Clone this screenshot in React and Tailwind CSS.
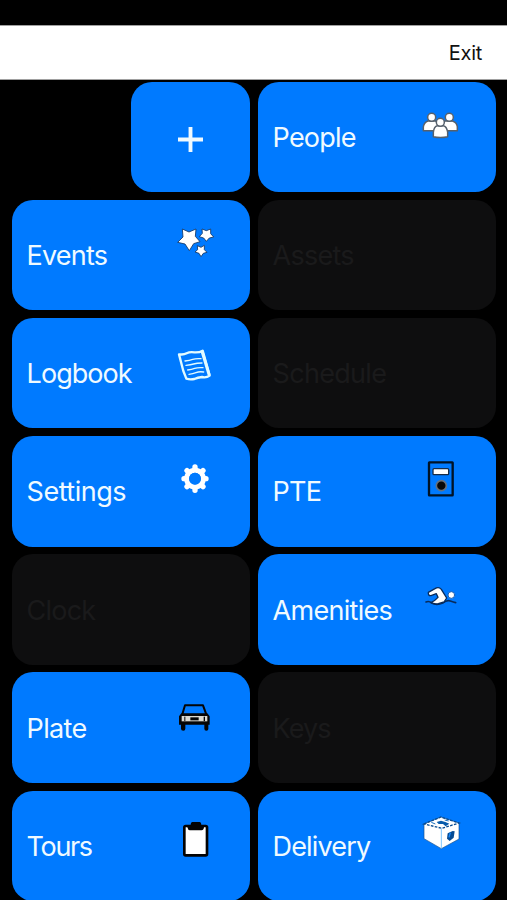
const PeopleIcon = () => (
    <svg viewBox="0 3 180 180" className="h-[60px] w-[60px] overflow-visible" fill="#fff" stroke="#56606c" strokeWidth="4.5" strokeLinejoin="round">
        <path d="M40 107V96Q42 82 54 78H77Q86 83 86 107Z" />
        <circle cx="65" cy="67" r="12" />
        <path d="M95 107Q95 83 105 78H127Q140 82 142 95V107Z" />
        <circle cx="118" cy="67" r="12" />
        <path d="M70 125V112Q72 94 82 92H100Q110 94 113 111V125Q91 130 70 125Z" />
        <circle cx="91" cy="82" r="12" />
    </svg>
);

const EventsIcon = () => (
    <svg viewBox="-3 -3 180 180" className="h-[60px] w-[60px] overflow-visible" fill="#fff" stroke="#12345f" strokeWidth="2.5" strokeLinejoin="round">
        <path d="M52 42L72 51L93 42L91 64L105 80L86 86L73 107L60 87L38 82L54 66Z" />
        <path d="M111 42L124 47L137 42L137 56L146 66L133 69L124 79L116 69L103 65L112 55Z" />
        <path d="M97 92L108 97L118 91L118 104L126 112L115 115L108 125L102 115L90 111L98 104Z" />
    </svg>
);

const LogbookIcon = () => (
    <svg viewBox="-3 -9 180 180" className="h-[60px] w-[60px] overflow-visible" fill="none" stroke="#e2fbff" strokeWidth="7" strokeLinejoin="round" strokeLinecap="round">
        <path d="M42 58Q56 60 65 55T88 52Q103 53 113 47L134 122Q124 129 111 126Q98 127 88 132Q75 135 64 131L55 108Z" />
        <path d="M112 52L132 118" strokeWidth="9" />
        <path d="M60 78Q74 76 83 73T108 71M63 91Q77 90 86 87T111 84M68 105Q80 103 89 100T114 98M72 118Q84 117 93 113T116 111" strokeWidth="4" />
    </svg>
);

const SettingsIcon = () => (
    <svg viewBox="-3 0 180 180" className="h-[60px] w-[60px] overflow-visible" fill="#fff">
        <circle cx="90" cy="86" r="25" fill="none" stroke="#fff" strokeWidth="15" />
        <g stroke="#fff" strokeWidth="16" strokeLinecap="round">
            <path d="M90 57V51M90 115V121M61 86H57M119 86H123M69 65L66 62M111 107L114 110M69 107L66 110M111 65L114 62" />
        </g>
        <circle cx="90" cy="86" r="18" fill="#007aff" />
    </svg>
);

const PteIcon = () => (
    <svg viewBox="0 0 180 180" className="h-[60px] w-[60px] overflow-visible" fill="none">
        <rect x="57" y="37" width="71" height="99" rx="1" stroke="#001326" strokeWidth="7" />
        <rect x="69" y="56" width="47" height="18" rx="3" fill="#fff" stroke="#172c48" strokeWidth="4" />
        <circle cx="94" cy="107" r="15" fill="#080808" stroke="#66717e" strokeWidth="5" />
    </svg>
);

const AmenitiesIcon = () => (
    <svg viewBox="0 -4 180 180" className="h-[60px] w-[60px] overflow-visible" fill="#fff" strokeLinejoin="round" strokeLinecap="round">
        <path d="M48 98Q57 94 65 101Q80 109 98 101Q111 91 121 95T137 100" fill="none" stroke="#082b5b" strokeWidth="5" />
        <path d="M55 69L75 58Q86 51 94 60L110 86L102 98L85 103Q70 105 64 99Q75 94 84 84L79 73L63 79Q54 80 55 69Z" stroke="#082b5b" strokeWidth="4" />
        <circle cx="124" cy="77" r="10" stroke="#1b60b5" strokeWidth="3" />
    </svg>
);

const PlateIcon = () => (
    <svg viewBox="-3 -10 180 180" className="h-[60px] w-[60px] overflow-visible" fill="#050505">
        <path d="M51 78L60 48H114L125 78" fill="none" stroke="#050505" strokeWidth="6" strokeLinejoin="round" />
        <path d="M49 72H127L134 81V106H130V119Q130 124 124 124Q118 124 118 118V106H61V118Q61 124 55 124Q48 124 48 118V106H42V81Z" />
        <rect x="50" y="80" width="77" height="16" fill="#d9d9d2" />
        <rect x="58" y="82" width="3" height="13" />
        <rect x="76" y="84" width="25" height="9" />
        <rect x="116" y="82" width="4" height="13" />
    </svg>
);

const ToursIcon = () => (
    <svg viewBox="-3 -15 180 180" className="h-[60px] w-[60px] overflow-visible" fill="#030303">
        <path d="M62 44H77Q77 36 82 36H104Q109 36 109 44H122Q130 44 130 52V132Q130 140 122 140H62Q54 140 54 132V52Q54 44 62 44Z" />
        <path d="M62 52H67Q69 61 75 61H110Q116 61 117 52H122V132H62Z" fill="#fff" />
    </svg>
);

const DeliveryIcon = () => (
    <svg viewBox="0 0 180 180" className="h-[60px] w-[60px] overflow-visible" fill="#fff">
        <path d="M42 57L93 36L147 54V102L94 131L42 101Z" stroke="#16508c" strokeWidth="2" />
        <path d="M42 57L93 36L147 54L96 70Z" fill="none" stroke="#074b91" strokeWidth="4" strokeDasharray="8 4" />
        <path d="M94 70V130" stroke="#7ec6ff" strokeWidth="3" />
        <path d="M80 51L93 47L106 51L118 56L107 64L99 57L86 57Z" fill="#075bab" />
        <path d="M64 52L76 57M104 45L116 48" stroke="#1b70bf" strokeWidth="3" />
        <path d="M113 85L128 78L134 79L131 98L119 108L111 101Z" fill="#064b94" />
        <path d="M121 83L117 97" stroke="#168aff" strokeWidth="4" />
    </svg>
);

const tiles = [
    { name: 'Events', icon: EventsIcon, spacing: 'tracking-[-0.8px]' },
    { name: 'Assets', spacing: 'tracking-[-0.75px]' },
    { name: 'Logbook', icon: LogbookIcon, spacing: 'tracking-[-0.95px]' },
    { name: 'Schedule', spacing: 'tracking-[-0.7px]' },
    { name: 'Settings', icon: SettingsIcon, spacing: 'tracking-[-0.5px]' },
    { name: 'PTE', icon: PteIcon, spacing: 'tracking-[-0.8px]' },
    { name: 'Clock', spacing: 'tracking-[-0.8px]' },
    { name: 'Amenities', icon: AmenitiesIcon, spacing: 'tracking-[-0.7px]' },
    { name: 'Plate', icon: PlateIcon, spacing: 'tracking-[-0.65px]' },
    { name: 'Keys', spacing: 'tracking-[-0.9px]' },
    { name: 'Tours', icon: ToursIcon, spacing: 'tracking-[-1.35px]' },
    { name: 'Delivery', icon: DeliveryIcon, spacing: 'tracking-[-0.85px]' },
];

const Tile = ({ name, icon: Icon, spacing }) => (
    <button
        disabled={!Icon}
        className={`flex h-[110.5px] rounded-[21px] text-left ${Icon ? 'bg-[#007aff] text-[#f0faff]' : 'bg-[#0e0e0f] text-[#1a1a1b]'}`}
    >
        <span className={`flex h-full w-[152px] shrink-0 items-center pt-[2.5px] pl-[14.6px] text-[27px] ${spacing}`}>{name}</span>
        {Icon && <span className="mt-[14px]"><Icon /></span>}
    </button>
);

const App = () => {
    return (
        <div className="h-[900px] w-[507px] overflow-hidden bg-black pt-[25px] font-['Inter',sans-serif]">
            <header className="flex h-[54.5px] items-center justify-end border-y border-[#a0a0a0] bg-white pr-[25px] text-[20px] tracking-[-0.3px] text-[#111]">
                <button className="pt-px">Exit</button>
            </header>
            <main className="grid grid-cols-[238px_238px] gap-x-2 gap-y-[7.65px] pt-[2.2px] pl-3">
                <button className="flex h-[110.5px] w-[119px] items-center justify-center justify-self-end rounded-[21px] bg-[#007aff] pr-px">
                    <svg viewBox="0 0 24 24" className="mt-[6px] h-[25px] w-[25px]" stroke="#f0faff" strokeWidth="3.7">
                        <path d="M12 0V24M0 12H24" />
                    </svg>
                </button>
                <Tile name="People" icon={PeopleIcon} spacing="tracking-[-0.8px]" />
                {tiles.map((tile) => <Tile key={tile.name} {...tile} />)}
            </main>
        </div>
    );
};

export default App;
